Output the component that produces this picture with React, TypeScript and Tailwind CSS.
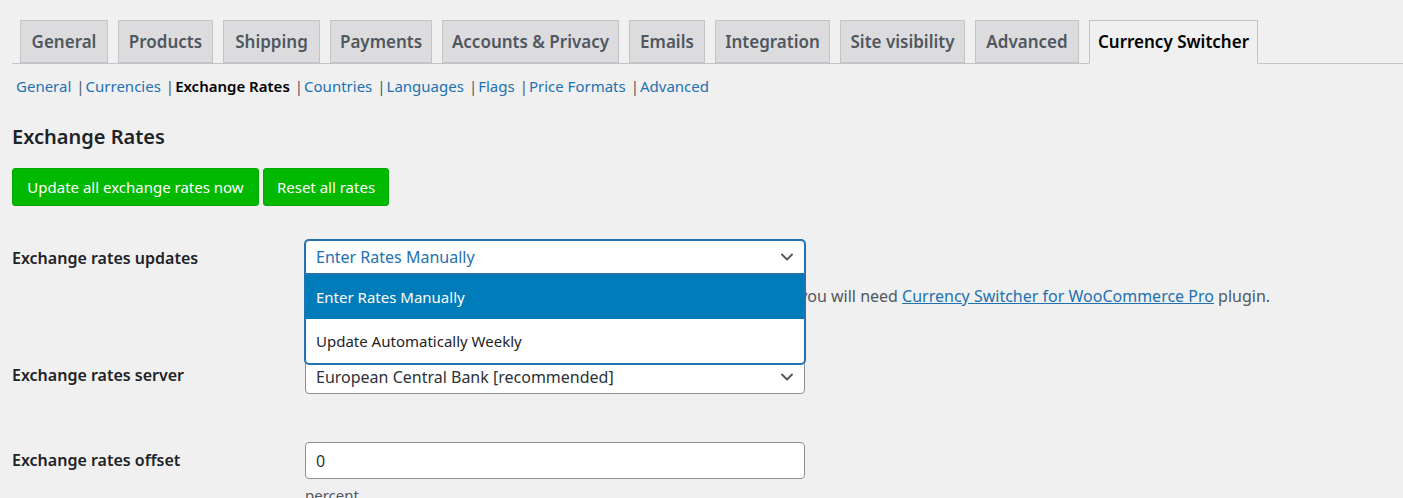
import { ChevronDown } from "lucide-react";

const tabs = [
  { id: 1, title: "General", cls: "w-[88px]" },
  { id: 2, title: "Products", cls: "w-[95px]" },
  { id: 3, title: "Shipping", cls: "w-[97px]" },
  { id: 4, title: "Payments", cls: "w-[102px]" },
  { id: 5, title: "Accounts & Privacy", cls: "w-[177px]" },
  { id: 6, title: "Emails", cls: "w-[76px]" },
  { id: 7, title: "Integration", cls: "w-[115px]" },
  { id: 8, title: "Site visibility", cls: "w-[125px]" },
  { id: 9, title: "Advanced", cls: "w-[104px]" },
  { id: 10, title: "Currency Switcher", cls: "w-[169px]", active: true },
];

const sections = [
  { id: 1, title: "General" },
  { id: 2, title: "Currencies" },
  { id: 3, title: "Exchange Rates", current: true },
  { id: 4, title: "Countries" },
  { id: 5, title: "Languages" },
  { id: 6, title: "Flags" },
  { id: 7, title: "Price Formats" },
  { id: 8, title: "Advanced" },
];

const App = () => {
  return (
    <div
      className="min-h-[498px] bg-[#f0f0f1] text-[#1d2327] overflow-hidden"
      style={{ fontFamily: '"Noto Sans", "Open Sans", sans-serif' }}
    >
      <div className="pl-[12px] pt-[20px]">
        {/* main tabs */}
        <nav className="flex items-end border-b border-[#c3c4c7] pl-[8px] gap-[10px]">
          {tabs.map((tab) => (
            <a
              key={tab.id}
              href="#"
              className={`${tab.cls} flex items-center justify-center border border-[#c3c4c7] text-[17px] font-semibold whitespace-nowrap ${
                tab.active
                  ? "h-[44px] -mb-px bg-[#f0f0f1] text-black border-b-[#f0f0f1]"
                  : "h-[43px] bg-[#dcdcde] text-[#50575e]"
              }`}
            >
              {tab.title}
            </a>
          ))}
        </nav>

        {/* sub sections */}
        <ul className="flex items-center text-[15px] mt-[11px] pl-[4px] h-[22px]">
          {sections.map((s, i) => (
            <li key={s.id} className="flex items-center">
              {i > 0 && <span className="ml-[5px] mr-[1px] text-[#50575e]">|</span>}
              {s.current ? (
                <span className="font-semibold text-black">{s.title}</span>
              ) : (
                <a href="#" className="text-[#2271b1]">
                  {s.title}
                </a>
              )}
            </li>
          ))}
        </ul>

        <h2 className="text-[20px] font-semibold mt-[26px] leading-[28px]">
          Exchange Rates
        </h2>

        <div className="flex gap-[4px] mt-[17px]">
          <button className="w-[247px] h-[38px] rounded-[3px] bg-[#00b900] border border-[#00a800] text-white text-[15px]">
            Update all exchange rates now
          </button>
          <button className="w-[126px] h-[38px] rounded-[3px] bg-[#00b900] border border-[#00a800] text-white text-[15px]">
            Reset all rates
          </button>
        </div>

        {/* form */}
        <div className="mt-[34px] text-[16px]">
          <div className="flex">
            <label className="w-[293px] font-semibold pt-[7px] leading-[22px]">
              Exchange rates updates
            </label>
            <div className="flex-1">
              <div className="relative w-[500px]">
                <div className="h-[34px] flex items-center justify-between pl-[10px] pr-[7px] bg-white border border-[#2271b1] rounded-t-[4px] shadow-[0_0_0_1px_#2271b1] text-[#2271b1]">
                  <span>Enter Rates Manually</span>
                  <ChevronDown size={20} strokeWidth={2.25} className="text-[#50575e]" />
                </div>
                <ul className="absolute left-0 top-full w-[500px] z-10 bg-white border border-[#2271b1] shadow-[0_0_0_1px_#2271b1] rounded-b-[4px] overflow-hidden text-[15px]">
                  <li className="h-[44px] flex items-center pl-[10px] bg-[#007cba] text-white">
                    Enter Rates Manually
                  </li>
                  <li className="h-[44px] flex items-center pl-[10px] text-[#1d2327]">
                    Update Automatically Weekly
                  </li>
                </ul>
              </div>
              <p className="mt-[11px] leading-[22px] text-[#50575e] whitespace-nowrap">
                If you want rates to be updated automatically every hour or daily,{" "}
                you will need{" "}
                <a href="#" className="text-[#2271b1] underline">
                  Currency Switcher for WooCommerce Pro
                </a>{" "}
                plugin.
              </p>
            </div>
          </div>

          <div className="flex mt-[53px]">
            <label className="w-[293px] font-semibold pt-[4px] leading-[22px]">
              Exchange rates server
            </label>
            <div className="w-[500px] h-[34px] flex items-center justify-between pl-[10px] pr-[7px] bg-white border border-[#8c8f94] rounded-[4px] text-[#2c3338]">
              <span>European Central Bank [recommended]</span>
              <ChevronDown size={20} strokeWidth={2.25} className="text-[#50575e]" />
            </div>
          </div>

          <div className="flex mt-[48px]">
            <label className="w-[293px] font-semibold pt-[7px] leading-[22px]">
              Exchange rates offset
            </label>
            <div>
              <div className="w-[500px] h-[37px] flex items-center pl-[10px] bg-white border border-[#8c8f94] rounded-[4px] text-[#2c3338]">
                0
              </div>
              <p className="mt-[5px] text-[#50575e] text-[15px] leading-[22px]">percent</p>
            </div>
          </div>
        </div>
      </div>
    </div>
  );
};

export default App;
